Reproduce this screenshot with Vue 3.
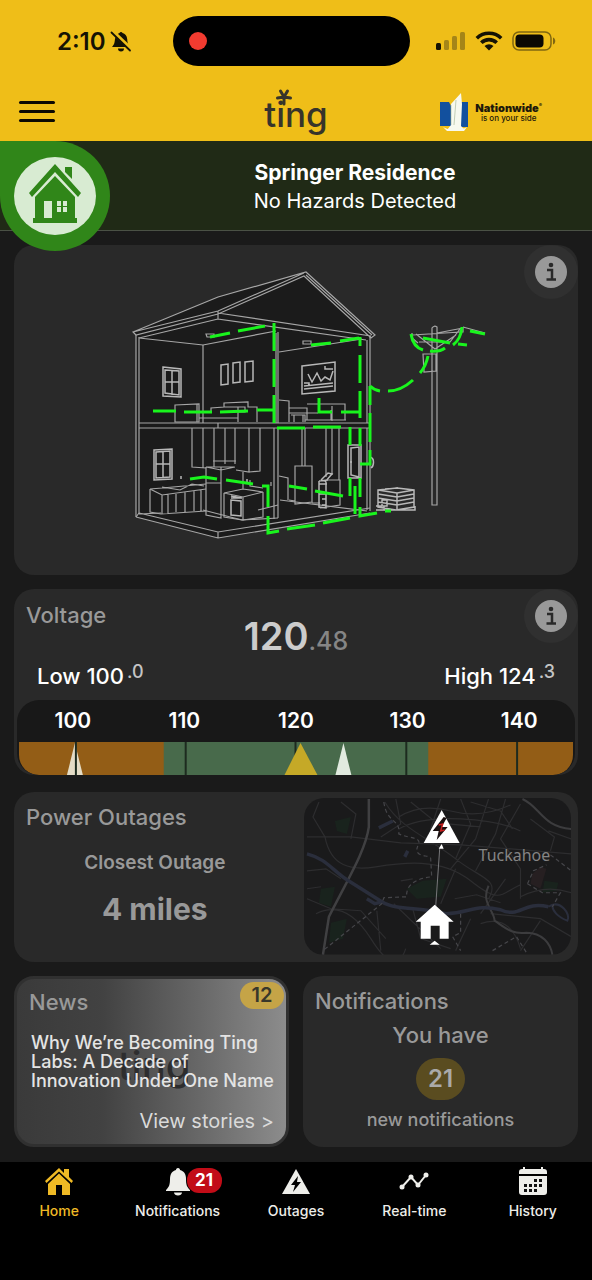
<script setup>
const ticks = [100, 110, 120, 130, 140]
const navItems = [
  { id: 'home', label: 'Home', active: true },
  { id: 'notifications', label: 'Notifications', badge: 21 },
  { id: 'outages', label: 'Outages' },
  { id: 'realtime', label: 'Real-time' },
  { id: 'history', label: 'History' },
]
</script>

<template>
  <div class="app">
    <header class="top">
      <div class="status">
        <div class="clock">
          <span>2:10</span>
          <svg width="22" height="22" viewBox="0 0 22 22" aria-hidden="true">
            <path d="M2 17c2.500-3 2.500-4 3-8C5.500 5.500 7.500 3.500 9.500 3a1.600 1.600 0 0 1 3 0C15 3.500 17 5.500 17.200 9c.3 4 .7 5 3 8z" fill="#151204" />
            <path d="M8 18.500h6a3 3 0 0 1-6 0z" fill="#151204" />
            <path d="M2.500 1.500 21 19" stroke="#efbe18" stroke-width="4" />
            <path d="M1.500 2.500 20 20.500" stroke="#151204" stroke-width="1.800" stroke-linecap="round" />
          </svg>
        </div>
        <div class="island"><i class="rec"></i></div>
        <div class="signals">
          <svg width="30" height="20" viewBox="0 0 30 20" aria-hidden="true">
            <rect x="0" y="12" width="5" height="7" rx="1.500" fill="#151204" />
            <g fill="#a58518"><rect x="8" y="9" width="5" height="10" rx="1.500" /><rect x="16" y="5" width="5" height="14" rx="1.500" /><rect x="24" y="1" width="5" height="18" rx="1.500" /></g>
          </svg>
          <svg width="28" height="20" viewBox="0 0 28 20" aria-hidden="true">
            <g fill="none" stroke="#151204" stroke-width="3.600"><path d="M1.800 7.200a17.500 17.500 0 0 1 24.400 0" /><path d="M6.300 11.800a11 11 0 0 1 15.400 0" /></g>
            <path d="M9.500 15a6.500 6.500 0 0 1 9 0L14 19.600z" fill="#151204" />
          </svg>
          <svg width="44" height="20" viewBox="0 0 44 20" aria-hidden="true">
            <rect x="1" y="1" width="38" height="18" rx="6" fill="none" stroke="#806710" stroke-width="1.500" />
            <rect x="3.500" y="3.500" width="28" height="13" rx="4" fill="#0b0903" />
            <path d="M41 6.500c3 1 3 6 0 7z" fill="#806710" />
          </svg>
        </div>
      </div>
      <div class="brandbar">
        <button class="menu" type="button" aria-label="Menu"><i></i><i></i><i></i></button>
        <div class="logo">ting
          <svg class="star" width="18" height="18" viewBox="0 0 18 18" aria-hidden="true">
            <path d="M9 9V16M9 9 2.500 10M9 9 15.500 10M9 9 5.500 3M9 9 12.500 3" stroke="#37342a" stroke-width="3" stroke-linecap="round" />
          </svg>
        </div>
        <div class="sponsor">
          <svg width="32" height="40" viewBox="0 0 32 40" aria-hidden="true">
            <path d="M1 10H10L14 18V34H1zM20 10h9v25h-9z" fill="#12509e" />
            <path d="M12 12 22 1l1 11-1 22 4 4H8l4-5z" fill="#f7f9ef" />
            <path d="M4 35c6 4 18 4 24 0l-3 4H8z" fill="#f7f9ef" />
            <path d="M12 13v20M17 8l-2 25" stroke="#9daf8f" stroke-width=".6" />
          </svg>
          <div class="sponsor-text"><b>Nationwide<sup>®</sup></b><span>is on your side</span></div>
        </div>
      </div>
    </header>

    <section class="banner">
      <div class="badge">
        <svg width="84" height="80" viewBox="0 0 84 80" aria-hidden="true">
          <ellipse cx="42" cy="40" rx="41" ry="39" fill="#d8ebd2" />
          <g fill="#308619">
            <path d="M42 8 16 37l3 4 23-25 23 25 3-4z" />
            <path d="M52 11h7v12l-7-7z" />
            <path d="M42 20 22 41v21h-2v5h44v-5h-2V41z" />
          </g>
          <path d="M31 45h8v17h-8zM44 45h4v5h-4zM50 45h4v5h-4zM44 51h4v5h-4zM50 51h4v5h-4z" fill="#d8ebd2" />
        </svg>
      </div>
      <div class="banner-text">
        <h1>Springer Residence</h1>
        <p>No Hazards Detected</p>
      </div>
    </section>

    <main class="content">
      <section class="card house">
        <button class="info" type="button" aria-label="About this diagram">
          <svg width="32" height="32" viewBox="0 0 32 32"><circle cx="16" cy="16" r="16" fill="#999" /><circle cx="16" cy="9" r="2.300" fill="#292929" /><path d="M12 14h5v9M11.500 23.500h9.500" fill="none" stroke="#292929" stroke-width="2.500" /></svg>
        </button>
        <svg class="scene" viewBox="14 245 564 330" aria-label="House wiring diagram">
          <path d="M133 332 219 297 306 272 375 335 370 337V513L218 538 136 517V335z" fill="#1b1b1b" />
          <g fill="none" stroke="#a6a6a6" stroke-width="1.200">
            <!-- roof -->
            <path d="M133 332 218 297 306 272 375 335 371 338 304 276 218 314 136 335zM133 332 218 311 304 273M306 275 372 335M218 311V319L366 340M218 313 371 336M139 338 218 319M139 338 203 345 276 331" />
            <!-- walls and floors -->
            <path d="M136 335V517M139 337V514M370 336V511M367 340V423M367 428V510M278 332V423M276 333V423M203 345V423M279 352 362 339M139 423H370M139 428H370M218 423V428M203 428V468M274 428V519M278 428V518" />
            <path d="M136 517 218 538 370 513M139 513 218 532 370 508M136 517 139 513M218 532V538M139 514 161 513M203 510 242 520 278 518M280 500 367 511M258 510 278 505" />
            <!-- upstairs furniture -->
            <path d="M175 405 199 404V422H175zM197 404V422M199 418H238V422M211 411V408L224 407V403L248 402V407H257V422M238 407V422M224 407H245V412H238M279 400 289 401V422M289 408H307V420M289 413H318M307 404H345V420H331V410M291 415H305V422M294 415V422M303 415V422M332 406V421M305 420H346" />
            <path d="M206 334H214V337H207zM303 341H311V344H303z" />
            <!-- kitchen -->
            <path d="M192 428V467L206 468M214 428V467M225 428V464M235 428V464M249 428V472L236 470M249 472 260 471V428M213 461H236M206 467H234M206 467V515L221 518V467M206 483H221M206 467 221 470 235 467" />
            <path d="M150 489 162 488 206 484M150 489V512L161 514 206 511M150 489 162 495 206 489M162 495V514M168 494V514M176 493V512M185 492V512M194 491V511M201 490V512M162 487 180 490 192 484 204 486" />
            <path d="M224 493 243 489 263 492 243 497zM224 493V517L243 520V497M263 492V517L243 520M243 472V489M250 480V486L263 488M271 482V486" />
            <!-- utility -->
            <path d="M302 428V466M305 428V466M295 466H312V502L295 504zM279 476 288 478V500M289 500 295 501M312 503H320M326 428V477M332 428V475M339 428V480M328 480H340V505L320 508" />
            <!-- pole -->
            <path d="M432 505V328Q434 325 437 327V505zM412 333V338L418 343M412 335 461 332M416 334 435 349 456 335M419 342H450L460 329M437 333 463 328M463 327V332H459M423 354H436V371L424 372zM463 327 485 333" />
          </g>
          <g fill="none" stroke="#b8b8b8" stroke-width="1.500">
            <!-- windows and pictures -->
            <path d="M163 367 181 369V397L163 396zM165 370 179 371V395L165 393zM172 370V395M165 382H179M154 450 172 449V479L154 480zM156 452 170 451V477L156 478zM163 452V477M156 464H170" />
            <path d="M221 365 228 364V384L221 385zM233 363 240 362V382L233 383zM245 362 253 361V381L245 382z" />
            <!-- monitor -->
            <path d="M302 366 335 362V391L302 394zM304 386 333 383M304 389 333 386M325 366V369H333M308 374 312 382 317 373 321 381 325 377 330 380 333 371M304 383H309V386" />
            <!-- appliances and panel -->
            <path d="M231 496 242 498M231 500V515L241 516V501zM231 498H242M181 476V479M247 479V483M319 481 328 480M319 481V507L326 508V482M319 484H327M319 494H327M321 480 328 473 332 474 325 482M322 499H326V505H322M348 445H361V478H348zM351 448 359 447V477L351 475zM350 462H352M370 457C375 458 374 466 371 468" />
            <!-- condenser -->
            <path d="M378 490 397 488 414 490V507L396 510 378 507zM378 490 397 493 414 490M397 493V510M378 494 397 497 414 494M378 498 397 501 414 498M378 502 397 505 414 502M376 506H384V510H376M384 510H415V506M382 500H387V506H382zM385 489 398 488" />
          </g>
          <g fill="none" stroke="#19f51d" stroke-width="3">
            <path d="M210 337 230 333M238 331 265 326M274 323V351M274 359V387M274 395V423M153 411H176M184 412H212M220 412 248 411M257 410H274M311 345 331 343M340 341 359 338M360 337V346M360 355V383M360 391V418M319 398V412H332M341 412H360" />
            <path d="M277 428H305M313 427H341M350 427V445M360 428V446M370 386V405M370 413V442M370 450V464H360M350 478V496M360 478V497M355 486V514M360 507V516L377 513M190 479 204 477 217 479M226 480 253 484M262 486H268V507M268 516V533L279 531M287 529 315 525M323 523 350 518M385 511H391M289 486 307 489M315 491 343 496" />
            <path d="M370 386Q374 390 380 391M388 391Q401 391 413 380M420 373Q426 366 428 356M411 334Q413 347 423 350M430 351Q440 352 445 348M453 345Q461 339 462 327M423 338 450 343M458 344 467 345M470 331 485 334" />
          </g>
        </svg>
      </section>

      <section class="card voltage">
        <button class="info" type="button" aria-label="About voltage">
          <svg width="32" height="32" viewBox="0 0 32 32"><circle cx="16" cy="16" r="16" fill="#999" /><circle cx="16" cy="9" r="2.300" fill="#292929" /><path d="M12 14h5v9M11.500 23.500h9.500" fill="none" stroke="#292929" stroke-width="2.500" /></svg>
        </button>
        <h2>Voltage</h2>
        <p class="reading">120<small>.48</small></p>
        <div class="range">
          <span>Low 100<sup>.0</sup></span>
          <span>High 124<sup>.3</sup></span>
        </div>
        <div class="gauge">
          <div class="ticks"><span v-for="t in ticks" :key="t">{{ t }}</span></div>
          <svg class="band" viewBox="0 0 555 33" preserveAspectRatio="none" aria-hidden="true">
            <path d="M0 0H555V33H0z" fill="#935d16" />
            <path d="M145 0H410V33H145z" fill="#486a4b" />
            <path d="M48 33 56 1 64 33z" fill="#e4dcc6" />
            <path d="M317 33 325 1 333 33z" fill="#e1eadf" />
            <path d="M57 0V33M167 0V33M277 0V33M388 0V33M499 0V33" stroke="#1d2b1f" stroke-width="2" />
            <path d="M266 33 282 1 299 33z" fill="#c5a927" />
          </svg>
        </div>
      </section>

      <section class="card outages">
        <div class="outage-info">
          <h2>Power Outages</h2>
          <p class="closest">Closest Outage</p>
          <p class="miles">4 miles</p>
        </div>
        <svg class="map" viewBox="303 799 268 157" preserveAspectRatio="xMidYMid slice" aria-label="Outage map">
          <path d="M303 799H571V956H303z" fill="#1a1a1b" />
          <g fill="#19231d"><path d="M334 822 350 818 346 835 336 832zM320 890 334 888 330 908 318 904zM406 890 422 882 446 880 440 898 416 900zM330 924 346 920 342 940 328 944zM544 882 558 884 556 892 542 894z" /></g>
          <path d="M532 875 540 868 546 870 540 890 530 885z" fill="#261f21" />
          <g fill="none" stroke="#2d2d2f" stroke-width="1.200">
            <path d="M306 838 350 838 400 844 460 846 571 855M318 803 312 818 324 838M324 838C330 868 350 872 375 868S440 858 470 882 500 895 520 886M384 803C400 830 430 840 455 860S500 880 488 900M395 800 400 825 380 838M410 803 436 824 480 828M440 800 430 830M460 800 470 825 455 860M488 800 475 840 450 870M505 800 495 835 475 872M520 805 500 840 520 870 520 900M398 818Q420 804 450 812T510 806M398 830Q420 818 460 820T520 832M306 872 325 870 340 880M306 900 330 910 360 912 385 940M315 915Q345 900 370 940T405 950M376 912 380 952M393 905 440 950M412 910 420 940 450 950M470 920 455 952M480 925Q510 915 520 950M490 915 540 920 571 938M520 898Q545 885 571 894M540 922 520 952M455 870 440 905M400 882 412 880M548 832 571 840M530 820 554 838 550 852M340 803 355 815 350 840M470 803 500 812 512 830M505 880 480 915M454 900 476 896 500 904M306 890 320 888" />
          </g>
          <path d="M368 800V828C365 850 350 875 328 918L322 956" fill="none" stroke="#404042" stroke-width="2.500" />
          <path d="M522 800C540 808 542 828 571 830M488 887C480 904 494 912 494 922C506 930 512 936 526 934C542 934 550 945 552 956" fill="none" stroke="#3c3c3e" stroke-width="2" />
          <path d="M306 855C325 860 330 870 346 881L381 903C395 912 420 908 445 915C470 914 475 905 500 911C520 920 522 902 548 908M366 900 374 905 382 903M378 829 392 822M407 852 404 858" fill="none" stroke="#2a2e3c" stroke-width="3.500" />
          <path d="M548 908C560 900 571 916 567 922C557 918 552 912 552 907" fill="none" stroke="#2a2e3c" stroke-width="2" />
          <path d="M383 803C386 825 400 820 398 835C410 840 420 838 418 845C410 860 430 855 430 860L431 878C410 880 405 890 406 898L383 899 381 905 322 952M460 915V934L452 938 460 952M492 952 516 938 526 954M550 856 571 872M527 885 533 872 546 866M527 885 542 894H560L552 908" fill="none" stroke="#46464a" stroke-width="1.200" stroke-dasharray="4 3" />
          <text x="478" y="862" class="place">Tuckahoe</text>
          <path d="M439 850 435 908" stroke="#77777a" stroke-width="1" />
          <path d="M441 811 459 844H423z" fill="#fff" />
          <path d="M443 818 432 832H438L436 841 447 828H441L446 819z" fill="#1a1010" /><path d="M438 826 442 825 440 832 444 831" fill="none" stroke="#c61d1d" stroke-width="1.500" />
          <path d="M441 845 443 850H438z" fill="#fff" />
          <path d="M434 906 453 923H448V940H439V927H430V940H420V923H415zM434 942 439 946H429z" fill="#fff" />
        </svg>
      </section>

      <div class="pair">
        <section class="card news">
          <span class="watermark" aria-hidden="true">ting</span>
          <h2>News</h2>
          <span class="count">12</span>
          <p class="headline">Why We’re Becoming Ting Labs: A Decade of Innovation Under One Name</p>
          <a class="more" href="#stories">View stories &gt;</a>
        </section>
        <section class="card notes">
          <h2>Notifications</h2>
          <p class="have">You have</p>
          <span class="pill">21</span>
          <p class="new">new notifications</p>
        </section>
      </div>
    </main>

    <nav class="tabs">
      <a v-for="item in navItems" :key="item.id" :href="'#' + item.id" :class="{ active: item.active }">
        <span class="icon">
          <svg v-if="item.id === 'home'" width="30" height="30" viewBox="0 0 30 30" aria-hidden="true">
            <path d="M15 1 1 14l1.500 2L15 4.500 27.500 16l1.500-2-4-4V2h-5v4z" fill="#efba25" />
            <path d="M15 6.500 4 17v11h8v-10h6v10h8V17z" fill="#efba25" />
          </svg>
          <svg v-else-if="item.id === 'notifications'" width="30" height="30" viewBox="0 0 30 30" aria-hidden="true">
            <path d="M15 1c1.500 0 2 1 2 2 4 1 6 4 6 9 0 6 1 8 4 11v1H3v-1c3-3 4-5 4-11 0-5 2-8 6-9 0-1 .5-2 2-2zM11 25.500h8c0 4-8 4-8 0z" fill="#eeeeea" />
          </svg>
          <svg v-else-if="item.id === 'outages'" width="30" height="30" viewBox="0 0 30 30" aria-hidden="true">
            <path d="M15 2 29 27H1z" fill="#eeeeea" /><path d="m17 9-7 9h4l-2 7 8-10h-4z" fill="#000" />
          </svg>
          <svg v-else-if="item.id === 'realtime'" width="30" height="30" viewBox="0 0 30 30" aria-hidden="true">
            <path d="M3 20 12 10 19 18 27 8" fill="none" stroke="#eeeeea" stroke-width="2" />
            <g fill="#eeeeea"><circle cx="3" cy="20" r="2.500" /><circle cx="12" cy="10" r="2.500" /><circle cx="19" cy="18" r="2.500" /><circle cx="27" cy="8" r="2.500" /></g>
          </svg>
          <svg v-else width="30" height="30" viewBox="0 0 30 30" aria-hidden="true">
            <path d="M1 7V5q0-3 3-3h1V0h2v2h16V0h2v2h1q3 0 3 3v2zM1 9h28v16q0 3-3 3H4q-3 0-3-3z" fill="#eeeeea" />
            <path d="M16 12h3v3h-3zM21 12h3v3h-3zM6 17h3v3H6zM11 17h3v3h-3zM16 17h3v3h-3zM21 17h3v3h-3zM6 22h3v3H6zM11 22h3v3h-3zM16 22h3v3h-3z" fill="#111" />
          </svg>
          <b v-if="item.badge">{{ item.badge }}</b>
        </span>
        {{ item.label }}
      </a>
    </nav>
  </div>
</template>

<style>
body { margin: 0; background: #1a1a1a; }
</style>

<style scoped>
.app { display: flex; flex-direction: column; min-height: 100vh; background: #1a1a1a; color: #fff; font-family: Inter, "Liberation Sans", sans-serif; }
.app * { box-sizing: border-box; }
h1, h2, p { margin: 0; }
button { border: 0; padding: 0; background: none; cursor: pointer; }
svg { display: block; }

.top { background: #efbe18; color: #151204; }
.status { display: grid; grid-template-columns: 1fr 237px 1fr; align-items: center; padding: 16px 9px 16px 0; }
.clock { display: flex; align-items: center; gap: 4px; padding-left: 57px; font-size: 24px; font-weight: 600; }
.island { height: 50px; border-radius: 25px; background: #000; display: flex; align-items: center; padding-left: 16px; }
.rec { width: 18px; height: 18px; border-radius: 50%; background: #f23b30; }
.signals { display: flex; align-items: center; justify-content: flex-end; gap: 9px; padding-right: 27px; }
.brandbar { display: grid; grid-template-columns: 1fr auto 1fr; align-items: center; height: 59px; }
.menu { display: flex; flex-direction: column; gap: 6px; width: 36px; margin-left: 19px; }
.menu i { height: 3px; border-radius: 2px; background: #0d0a02; }
.logo { position: relative; padding-top: 4px; font-size: 35px; line-height: 44px; font-weight: 500; color: #37342a; }
.star { position: absolute; left: 11px; top: 0; }
.sponsor { display: flex; align-items: center; gap: 4px; justify-self: end; padding-right: 50px; }
.sponsor-text { display: flex; flex-direction: column; align-items: center; font-size: 8px; line-height: 8px; color: #1d190b; font-weight: 500; }
.sponsor-text b { font-size: 11px; line-height: 12px; font-weight: 900; }
.sponsor-text sup { font-size: 5px; line-height: 0; }

.banner { display: flex; height: 90px; background: #202a16; border-bottom: 1px solid #4a5145; }
.badge { z-index: 1; flex: none; width: 110px; height: 110px; border-radius: 0 55px 55px 55px; background: #308619; display: flex; align-items: center; justify-content: center; }
.banner-text { flex: 1; text-align: center; padding: 18px 0 0 8px; }
.banner-text h1 { font-size: 21px; line-height: 28px; font-weight: 700; }
.banner-text p { font-size: 20px; line-height: 28px; }

.content { display: flex; flex-direction: column; gap: 14px; padding: 14px 14px 15px; }
.card { position: relative; background: #292929; border-radius: 20px; }
h2 { font-size: 22px; line-height: 28px; font-weight: 500; color: #999; }
.scene { width: 100%; }
.info { position: absolute; top: 0; right: 0; width: 54px; height: 54px; border-radius: 50%; background: #303030; display: flex; align-items: center; justify-content: center; }
.voltage { padding: 12px 3px 0; }
.voltage h2 { padding-left: 9px; }
.reading { text-align: center; font-size: 38px; line-height: 44px; margin-top: -15px; font-weight: 600; color: #ccc; }
.reading small { font-size: 25px; font-weight: 500; color: #858585; }
.range { display: flex; justify-content: space-between; padding: 0 20px 11px; font-size: 22px; line-height: 26px; font-weight: 500; }
.range sup { font-size: 18px; line-height: 0; vertical-align: 6px; color: #c4c4c4; margin-left: 3px; }
.gauge { overflow: hidden; border-radius: 22px; background: #181818; padding: 0 2px; }
.ticks { display: grid; grid-template-columns: repeat(5, 1fr); margin: 0 -2px; text-align: center; font-size: 21px; line-height: 42px; font-weight: 600; }
.band { width: 100%; height: 33px; border-radius: 0 0 20px 20px; }

.outages { display: flex; padding: 6px 7px 7px 0; margin-top: 3px; }
.outage-info { flex: 1; text-align: center; color: #999; padding: 5px 20px 0 12px; }
.outage-info h2 { text-align: left; }
.closest { font-size: 19px; line-height: 26px; font-weight: 600; margin-top: 19px; }
.miles { font-size: 30px; line-height: 36px; font-weight: 700; margin-top: 15px; }
.map { width: 48%; border-radius: 20px; }
.place { font-family: "Noto Sans", sans-serif; font-size: 16px; fill: #858585; }

.pair { display: grid; grid-template-columns: 1fr 1fr; gap: 14px; }
.pair .card { height: 171px; }
.news { border: 3px solid #303030; background: linear-gradient(90deg, #3a3a3a 0%, #424242 32%, #686868 68%, #8c8c8c 100%); padding: 9px 12px; display: flex; flex-direction: column; }
.watermark { position: absolute; left: 101px; top: 62px; font-size: 40px; line-height: 50px; font-weight: 500; color: #2d2d2e; }
.news h2 { position: relative; }
.count { position: absolute; top: 3px; right: 2px; width: 44px; border-radius: 14px; background: #c5a447; color: #38372a; text-align: center; font-size: 20px; line-height: 27px; font-weight: 600; }
.headline { position: relative; font-size: 18px; line-height: 19px; font-weight: 500; color: #e4e4e4; margin: 17px 0 0 2px; }
.more { margin-top: auto; align-self: flex-end; color: #dadada; font-size: 20px; line-height: 28px; text-decoration: none; }
.notes { padding: 11px 12px; text-align: center; color: #999; }
.notes h2 { text-align: left; }
.have { font-size: 22px; line-height: 28px; font-weight: 500; margin-top: 6px; }
.pill { display: block; width: 49px; margin: 9px auto 0; border-radius: 21px; background: #5a4c20; font-size: 24px; line-height: 42px; font-weight: 600; color: #aaa; }
.new { font-size: 18px; line-height: 24px; font-weight: 500; margin-top: 8px; }

.tabs { flex: 1; display: grid; grid-template-columns: repeat(5, 1fr); background: #000; padding: 5px 0 50px; }
.tabs a { display: flex; flex-direction: column; align-items: center; gap: 4px; color: #eeeeea; font-size: 14px; line-height: 20px; text-decoration: none; font-weight: 500; }
.tabs a.active { color: #efba25; }
.icon { position: relative; }
.icon b { position: absolute; left: 24px; top: 1px; width: 35px; border-radius: 12px; background: #c20c17; color: #fff; text-align: center; font-size: 17px; line-height: 25px; font-weight: 700; }
</style>
